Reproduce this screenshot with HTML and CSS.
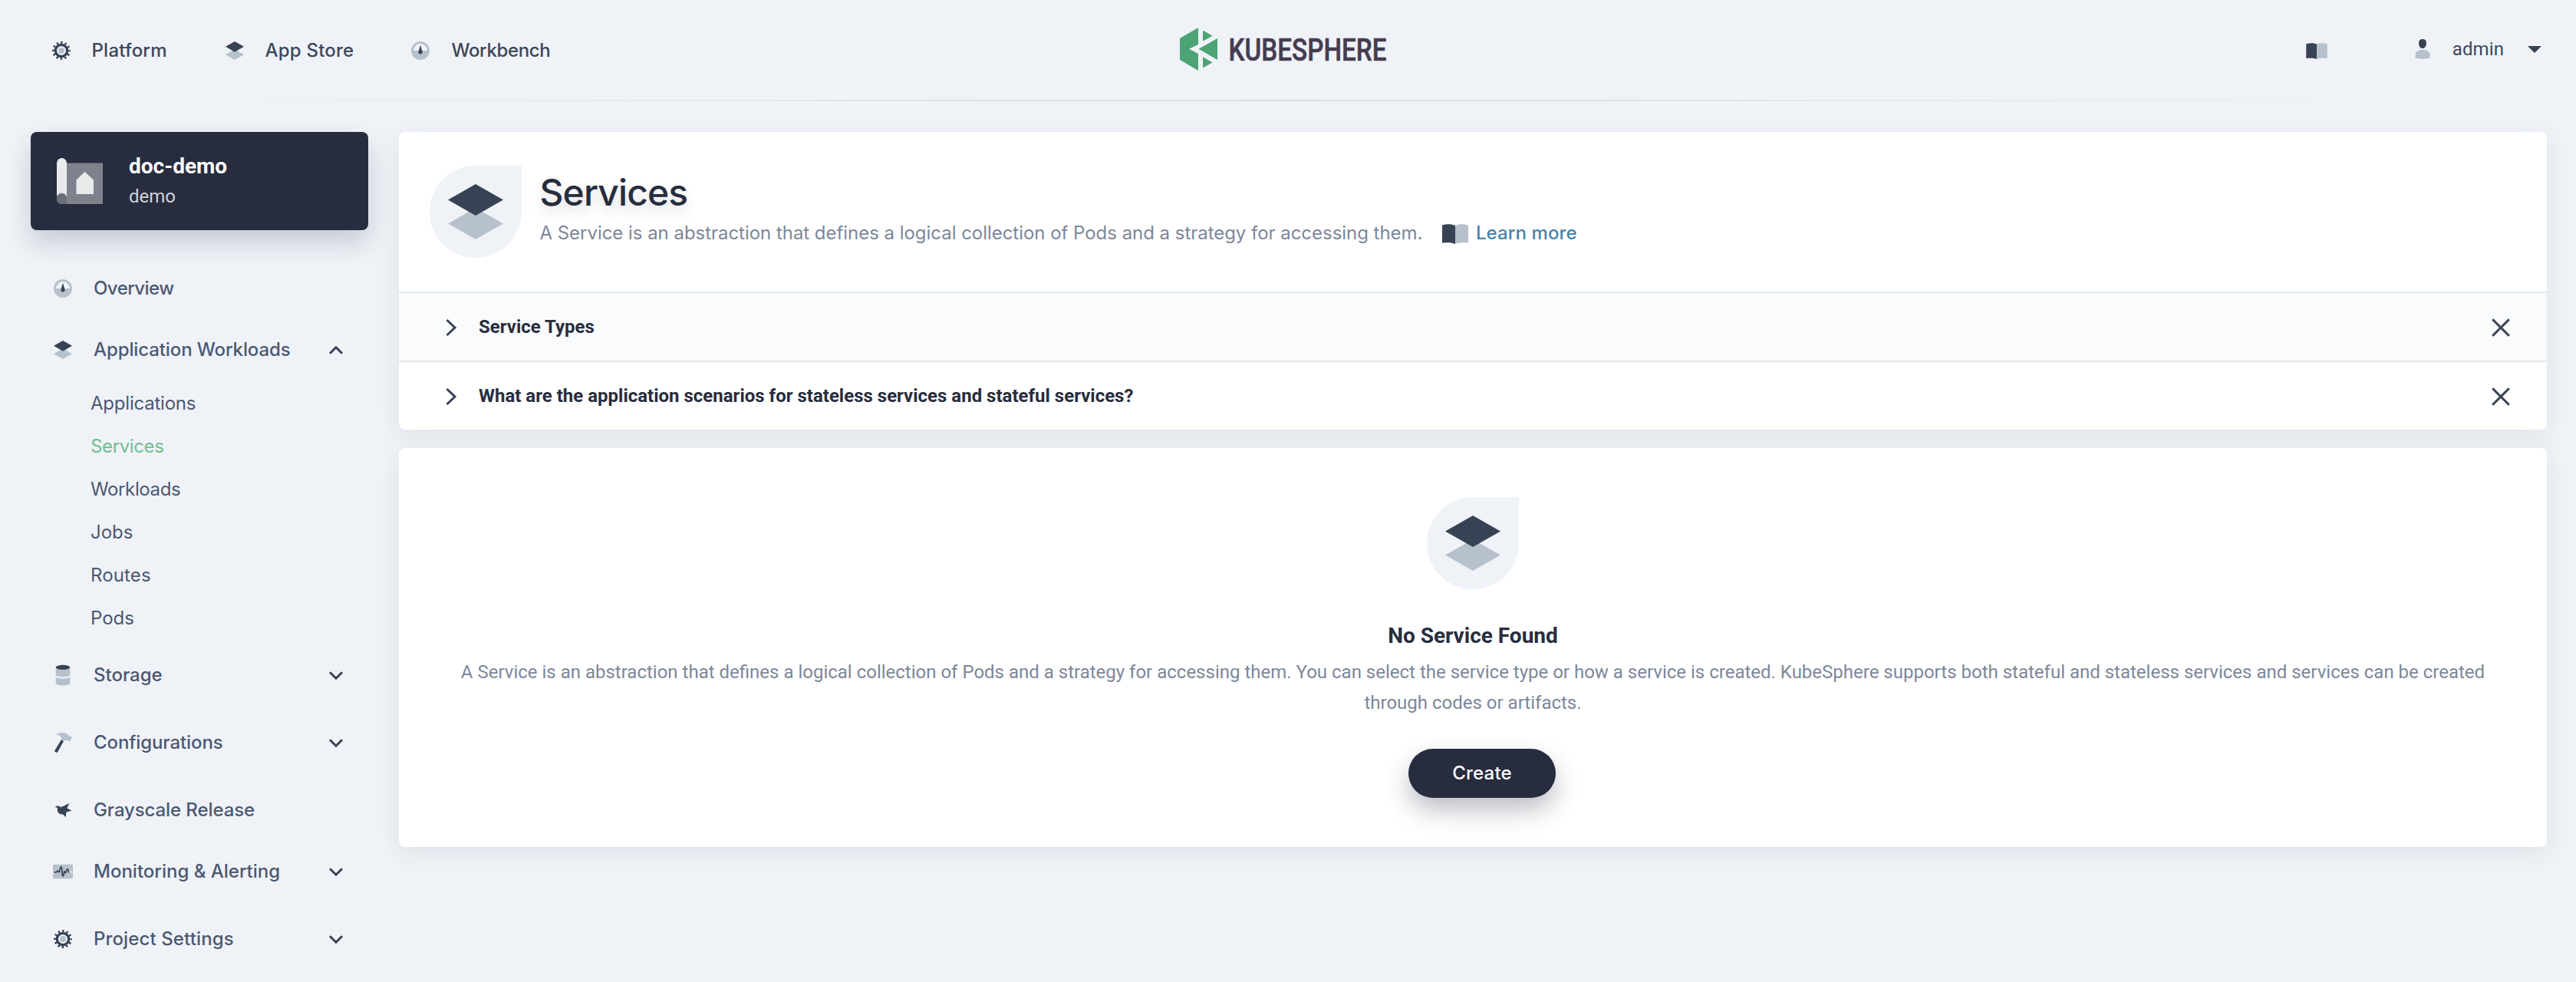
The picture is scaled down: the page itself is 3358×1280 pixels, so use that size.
FILE: index.html
```html
<!DOCTYPE html>
<html lang="en">
<head>
<meta charset="utf-8">
<title>Services - KubeSphere</title>
<link rel="stylesheet" href="styles.css">
</head>
<body>
<svg class="sprite" aria-hidden="true">
  <symbol id="gear" viewBox="0 0 24 24">
    <circle class="teeth" cx="12" cy="12" r="10.4"/>
    <circle class="ring" cx="12" cy="12" r="7.7"/>
    <circle class="light" cx="12" cy="12" r="4"/>
  </symbol>
  <symbol id="layers" viewBox="0 0 72 72">
    <path class="light" d="M36 31 72 51.5 36 72 0 51.5z"/>
    <path class="dark" d="M36 0 72 20.5 36 41 0 20.5z"/>
  </symbol>
  <symbol id="gauge" viewBox="0 0 24 24">
    <circle class="light" cx="12" cy="12" r="12"/>
    <path class="page" d="M3 12a9 9 0 0 1 18 0z"/>
    <path class="dark" d="M12 4.8 14.5 13.2a2.6 2.6 0 1 1-5 0z"/>
  </symbol>
  <symbol id="book" viewBox="0 0 34 26">
    <path class="dark" d="M0 1.5C6-.4 12-.3 17 2v24c-4-1.8-10-2-17-1.3z"/>
    <path class="light" d="M34 1.5C28-.4 22-.3 17 2v24c4-1.8 10-2 17-1.3z"/>
  </symbol>
  <symbol id="down" viewBox="0 0 18 11">
    <path class="stroke" d="M1 1.2l8 8 8-8"/>
  </symbol>
  <symbol id="right" viewBox="0 0 14 22">
    <path class="stroke" d="M1.5 1l10.5 10L1.5 21"/>
  </symbol>
  <symbol id="close" viewBox="0 0 24 24">
    <path class="stroke" d="M1.2 1.2l21.6 21.6M22.8 1.2L1.2 22.8"/>
  </symbol>
</svg>

<header class="header">
  <nav class="header-nav">
    <a class="header-link platform"><svg class="icon"><use href="#gear"/></svg><span class="track-2">Platform</span></a>
    <a class="header-link store"><svg class="icon"><use href="#layers"/></svg><span class="track-2">App Store</span></a>
    <a class="header-link bench"><svg class="icon"><use href="#gauge"/></svg><span class="track-n3">Workbench</span></a>
  </nav>
  <svg class="logo" viewBox="0 0 272 56">
    <path class="green" d="M0 14 24 0v22l-12 5.700L24 34v22L0 42zM30 3.500l12.500 7.300L30 17.700zM24.500 27.700 49 14v28zM30 38.200l12.500 7.300L30 52.500z"/>
    <text class="logo-text" x="63.500" y="43" textLength="206" lengthAdjust="spacingAndGlyphs">KUBESPHERE</text>
  </svg>
  <div class="header-user">
    <svg class="docs"><use href="#book"/></svg>
    <svg class="avatar" viewBox="0 0 20 26">
      <path class="dark" d="M10 0c3.500 0 5.200 2.200 4.900 5.500C14.700 9.500 13 12 10 12S5.300 9.500 5.100 5.500C4.800 2.200 6.500 0 10 0z"/>
      <path class="light" d="M.5 24.500V20c0-3.500 4-6 9.500-6s9.500 2.500 9.500 6v4.500c-5 1.700-14 1.700-19 0z"/>
    </svg>
    <span class="user-name">admin</span>
    <svg class="caret" viewBox="0 0 18 9"><path class="dark" d="M0 0h18L9 9z"/></svg>
  </div>
</header>

<div class="layout">
  <aside class="sidebar">
    <div class="project">
      <svg class="project-icon" viewBox="0 0 60 60">
        <path class="sheet" d="M13 6.500h47V60H6a6.500 6.500 0 0 1-6-6.500z"/>
        <path class="roll" d="M0 6.500a6.500 6.500 0 0 1 13 0V52a6.500 6.500 0 0 0-13 0z"/>
        <path class="curl" d="M0 53a6.500 6.500 0 0 1 13 0v3l1 4H6.500A6.500 6.500 0 0 1 0 53z"/>
        <path class="roll" d="M36.500 18 48 28.500V47H25.500V28.500z"/>
      </svg>
      <div>
        <div class="project-name">doc-demo</div>
        <div class="project-sub">demo</div>
      </div>
    </div>
    <nav class="menu">
      <a class="item"><svg class="icon"><use href="#gauge"/></svg><span class="track-n5">Overview</span></a>
      <a class="item"><svg class="icon"><use href="#layers"/></svg><span class="track-n1">Application Workloads</span><svg class="fold open"><use href="#down"/></svg></a>
      <div class="submenu">
        <a class="track-n2">Applications</a>
        <a class="active track-n3">Services</a>
        <a class="track-n3">Workloads</a>
        <a>Jobs</a>
        <a class="track-1">Routes</a>
        <a>Pods</a>
      </div>
      <a class="item tall"><svg class="icon" viewBox="0 0 24 24">
        <path class="light" d="M2.700 2.500h18.600v9.500c-1.500 3-17.100 3-18.600 0zM2.700 14.500c3 2.600 15.600 2.600 18.600 0V23c-1.500 3.300-17.100 3.300-18.600 0z"/>
        <ellipse class="dark" cx="12" cy="1.800" rx="9.300" ry="3"/>
      </svg><span>Storage</span><svg class="fold"><use href="#down"/></svg></a>
      <a class="item tall"><svg class="icon" viewBox="0 0 24 24">
        <path class="light" d="M3 1.500C6-.8 12-2 16.500-.2L19 2.500 24 5 21 10.800 16.500 8.500 13.500 9.500 10.300 8C10 4 8 1.800 3 1.500z"/>
        <path class="dark" d="M9.800 8.300 13 10 4.500 25.300.8 23.200z"/>
      </svg><span class="track-n1">Configurations</span><svg class="fold"><use href="#down"/></svg></a>
      <a class="item tall"><svg class="icon" viewBox="0 0 24 24">
        <path class="dark" d="M1.500 7.300C4.500 6 7.500 6 9.200 8.300 12 7 16 5.500 20.500 2.700L17.300 9.500 23.500 12.500 16.300 14.800 15.700 21.300 11.800 17.300C7 18 4 14.500 5 9.300z"/>
      </svg><span class="track-n1">Grayscale Release</span></a>
      <a class="item short"><svg class="icon" viewBox="0 0 24 24">
        <rect class="light" x="-1" y="2.700" width="26" height="18.600" rx="1.500"/>
        <path class="wave" d="M1.500 12.800H3.500L5 11.200 7.200 12.800 8.800 7Q9.800 5 10.600 7.500L11.300 17Q12 19 13 16.500L13.800 11.800 15.800 13.500 17.500 9 18.500 9 20 13"/>
        <circle class="dot" cx="22" cy="12.500" r="1.400"/>
      </svg><span>Monitoring &amp; Alerting</span><svg class="fold"><use href="#down"/></svg></a>
      <a class="item tall last"><svg class="icon"><use href="#gear"/></svg><span class="track-1">Project Settings</span><svg class="fold"><use href="#down"/></svg></a>
    </nav>
  </aside>

  <main class="main">
    <section class="panel">
      <div class="banner">
        <div class="drop"><svg class="drop-icon"><use href="#layers"/></svg></div>
        <div class="banner-text">
          <h1>Services</h1>
          <p>A Service is an abstraction that defines a logical collection of Pods and a strategy for accessing them.<svg class="learn-icon"><use href="#book"/></svg><a class="learn track-1">Learn more</a></p>
        </div>
      </div>
      <div class="tip shaded"><svg class="tip-arrow"><use href="#right"/></svg><span class="tip-text">Service Types</span><svg class="tip-close"><use href="#close"/></svg></div>
      <div class="tip"><svg class="tip-arrow"><use href="#right"/></svg><span class="tip-text">What are the application scenarios for stateless services and stateful services?</span><svg class="tip-close"><use href="#close"/></svg></div>
    </section>

    <section class="panel empty">
      <div class="drop"><svg class="drop-icon"><use href="#layers"/></svg></div>
      <h2>No Service Found</h2>
      <p>A Service is an abstraction that defines a logical collection of Pods and a strategy for accessing them. You can select the service type or how a service is created. KubeSphere supports both stateful and stateless services and services can be created through codes or artifacts.</p>
      <button class="create track-2">Create</button>
    </section>
  </main>
</div>
</body>
</html>
```
FILE: styles.css
```css
* { box-sizing: border-box; }

body {
  margin: 0;
  height: 1280px;
  overflow: hidden;
  background: #eff3f8;
  color: #3b465b;
  font: 400 24px/40px Inter, "Liberation Sans", sans-serif;
}

h1, h2, p { margin: 0; }
svg { display: block; flex: none; overflow: visible; }
.sprite { position: absolute; width: 0; height: 0; }
symbol { overflow: visible; }

.dark { fill: #374254; }
.light { fill: #b7c1cc; }
.page { fill: #eff3f8; }
.green { fill: #4ca475; }
.stroke { fill: none; stroke: #374254; stroke-width: 3; }
.ring { fill: #eff3f8; stroke: #374254; stroke-width: 3.2; }
.teeth {
  fill: none;
  stroke: #374254;
  stroke-width: 3.2;
  stroke-dasharray: 2.3 3.145;
  stroke-dashoffset: 1.15;
}
.wave { fill: none; stroke: #374254; stroke-width: 1.7; stroke-linejoin: round; stroke-linecap: round; }
.dot { fill: #eff3f8; }

.track-2 { letter-spacing: .22px; }
.track-1 { letter-spacing: .12px; }
.track-n1 { letter-spacing: -.1px; }
.track-n2 { letter-spacing: -.22px; }
.track-n3 { letter-spacing: -.37px; }
.track-n5 { letter-spacing: -.55px; }

.icon { width: 24px; height: 24px; }

/* Top bar */
.header {
  display: grid;
  grid-template-columns: 1538px 272px 1fr;
  height: 132px;
  border-bottom: 2px solid;
  border-image: linear-gradient(90deg, #f1f5f8, #d8dde3 50%, #f1f5f8) 1;
}
.header-nav { display: flex; padding-left: 68px; height: 132px; font-weight: 500; }
.header-link { display: flex; align-items: center; }
.platform { width: 226px; gap: 27.500px; }
.store { width: 242px; gap: 27.500px; }
.bench { gap: 28.500px; }
.logo { width: 272px; height: 56px; margin-top: 36px; }
.logo-text {
  font: 500 41.500px Roboto, sans-serif;
  fill: #463c4f;
  stroke: #463c4f;
  stroke-width: .6;
  stroke-linejoin: round;
}
.header-user { display: flex; align-items: center; justify-content: flex-end; height: 128px; padding-right: 45px; }
.docs { width: 28px; height: 21px; margin: 5px 114px 0 0; }
.avatar { width: 20px; height: 26px; margin-right: 29px; }
.user-name { font-family: Roboto, sans-serif; letter-spacing: .1px; margin-right: 31px; }
.caret { width: 18px; height: 9px; }

/* Page columns */
.layout { display: flex; gap: 40px; padding: 40px 38px 0 40px; }
.sidebar { width: 440px; flex: none; }
.main { flex: 1; display: flex; flex-direction: column; gap: 24px; }

.project {
  display: flex;
  align-items: center;
  gap: 34px;
  height: 128px;
  padding-left: 34px;
  border-radius: 8px;
  background: #272d3e;
  box-shadow: 0 16px 32px rgba(39, 45, 62, .2);
}
.project-icon { width: 60px; height: 60px; }
.sheet { fill: #7f828c; }
.curl { fill: #6b6f7a; }
.roll { fill: #e9eaec; }
.project-name { font: 700 28px/40px Roboto, sans-serif; color: #fff; }
.project-sub { font: 400 24px/38px Roboto, sans-serif; color: #d0d3da; }

.menu { padding-top: 36px; color: #4c5872; }
.item { display: flex; align-items: center; gap: 28px; height: 80px; padding: 0 33px 0 30px; font-weight: 500; }
.tall { height: 88px; }
.short { height: 72px; }
.last { margin-top: 8px; }
.fold { width: 18px; height: 11px; margin-left: auto; }
.open { transform: scaleY(-1); }
.submenu { display: flex; flex-direction: column; padding: 2px 0 2px 78px; line-height: 56px; }
.active { color: #72bd8d; }

/* Cards */
.panel { border-radius: 8px; background: #fff; box-shadow: 0 8px 32px rgba(39, 45, 62, .08); }
.drop {
  display: flex;
  align-items: center;
  justify-content: center;
  flex: none;
  width: 120px;
  height: 120px;
  border-radius: 60px 0 60px 60px;
  background: #eff3f8;
}
.drop-icon { width: 72px; height: 72px; }

.banner { display: flex; gap: 23.500px; height: 208px; padding: 44px 40px 0; }
.banner-text { padding-top: 3px; }
.banner h1 {
  font-size: 48px;
  line-height: 64px;
  font-weight: 550;
  letter-spacing: -.9px;
  color: #272d3e;
  text-shadow: 0 8px 16px rgba(39, 45, 62, .16);
}
.banner p { display: flex; align-items: center; margin-top: 1px; letter-spacing: -.035px; color: #7c879a; }
.learn-icon { width: 34px; height: 26px; margin: 1px 9.500px 0 26px; }
.learn { font-weight: 500; color: #4584ac; }

.tip {
  display: flex;
  align-items: center;
  height: 90px;
  padding: 2px 48px 0 61px;
  border-top: 2px solid #e3e9ef;
  font: 700 24px/40px Roboto, sans-serif;
  color: #272d3e;
}
.shaded { background: #f9fbfd; }
.tip-arrow { width: 14px; height: 22px; margin-right: 29px; }
.tip-text { padding-bottom: 2px; }
.tip-close { width: 24px; height: 24px; margin-left: auto; }

.empty {
  display: flex;
  flex-direction: column;
  align-items: center;
  height: 520px;
  padding: 64px 80px 0;
  font-family: Roboto, sans-serif;
}
.empty h2 { margin-top: 41px; font: 700 28px/40px Roboto, sans-serif; color: #272d3e; }
.empty p { margin-top: 7px; text-align: center; color: #7c879a; }
.create {
  width: 192px;
  height: 64px;
  margin: 40px 0 0 24px;
  border: 0;
  border-radius: 32px;
  background: #272d3e;
  box-shadow: 0 16px 32px rgba(39, 45, 62, .3);
  font: 500 24px/40px Inter, sans-serif;
  color: #fff;
}
```
